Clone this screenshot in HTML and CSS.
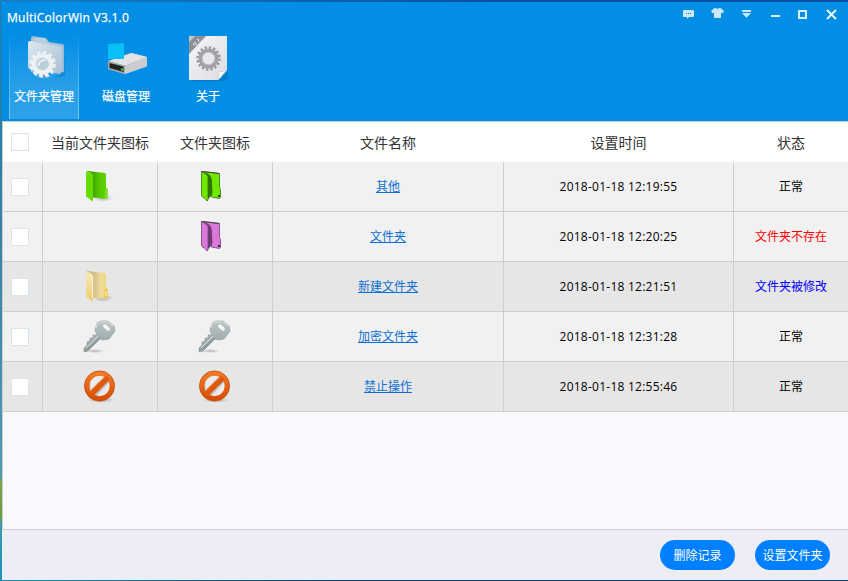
FILE: index.html
```html
<!DOCTYPE html>
<html lang="zh-CN">
<head>
<meta charset="utf-8">
<title>MultiColorWin V3.1.0</title>
<link rel="stylesheet" href="styles.css">
</head>
<body>
<svg class="defs" aria-hidden="true">
  <defs>
    <linearGradient id="folderGrad" x1="0" y1="0" x2="1" y2="1"><stop offset="0" stop-color="#dfe8f0"/><stop offset="1" stop-color="#a9c0d3"/></linearGradient>
    <linearGradient id="greenGrad" x1="0" x2="1"><stop offset=".2" stop-color="#3b9d00"/><stop offset=".6" stop-color="#55c600"/><stop offset="1" stop-color="#63d500"/></linearGradient>
    <linearGradient id="yellowGrad" x1="0" x2="1"><stop offset=".2" stop-color="#c9b684"/><stop offset=".7" stop-color="#efdd9c"/><stop offset="1" stop-color="#f0d46c"/></linearGradient>
    <linearGradient id="yellowFront" x1="0" y1="0" x2="0" y2="1"><stop offset="0" stop-color="#f6e9bb"/><stop offset="1" stop-color="#eecb68"/></linearGradient>
    <linearGradient id="keyGrad" x1="0" y1="0" x2="0" y2="1"><stop offset="0" stop-color="#bcc7c6"/><stop offset="1" stop-color="#8f9d9d"/></linearGradient>
    <linearGradient id="orangeGrad" x1="0" y1="0" x2="0" y2="1"><stop offset="0" stop-color="#f07c28"/><stop offset="1" stop-color="#d84e08"/></linearGradient>
    <linearGradient id="paperGrad" x1="0" y1="0" x2="1" y2="1"><stop offset="0" stop-color="#f6f6f8"/><stop offset="1" stop-color="#dcdde3"/></linearGradient>
    <radialGradient id="shadow"><stop offset="0" stop-color="#000" stop-opacity=".25"/><stop offset="1" stop-color="#000" stop-opacity="0"/></radialGradient>

    <symbol id="folder-green" viewBox="0 0 34 34">
      <ellipse cx="20" cy="28" rx="10" ry="4" fill="url(#shadow)"/>
      <path d="M4 1l18 2 1 1v14l1.500 1v8.500l-1.500 1.500-13-1.500z" fill="url(#greenGrad)"/>
      <path d="M22 20l2.500-1.500v9l-2 1.500-1-1z" fill="#72df18"/>
      <path d="M3 1.500q4 .5 6.500 3l.5 1v24.500l-1 1.500q-2-3-5.500-4.500L3 26z" fill="#68dd05"/>
      <path d="M3.500 2q4 .5 6 3" fill="none" stroke="#8aed38"/>
    </symbol>
    <symbol id="folder-yellow" viewBox="0 0 34 34">
      <ellipse cx="20" cy="28" rx="10" ry="4" fill="url(#shadow)"/>
      <path d="M4 1l18 2 1 1v14l1.500 1v8.500l-1.500 1.500-13-1.500z" fill="url(#yellowGrad)"/>
      <path d="M21.500 20l3-1.500v9l-2 1.500-1-1z" fill="#edc24a"/><path d="M23 21v5" stroke="#fff3c4"/>
      <path d="M3 1.500q4 .5 6.500 3l.5 1v24.500l-1 1.500q-2-3-5.500-4.500L3 26z" fill="url(#yellowFront)"/>
      <path d="M9.500 6v22" stroke="#fff5d2"/>
    </symbol>
    <symbol id="folder-lined" viewBox="0 0 34 34">
      <path d="M6 1.800l15.500 1.700v14l1 2v7.500l-1 1.500-8-1.500V12z" class="fill edge"/>
      <path d="M5 2q6 1 8 5 1.500 3 1 8l.5 7q-.5 4-4.500 7V6z" class="dark"/>
      <path d="M3.500 1.500q4 1.500 6.500 5v23.500l-1 1q-1.500-3-5-4.500l-.5-1z" class="fill edge"/>
      <path d="M3.500 1.500l4 .3 14 1.700" fill="none" stroke="#444"/>
      <path d="M20 26h2" stroke="#111" stroke-width="1.500"/>
    </symbol>
    <symbol id="key" viewBox="0 0 34 34">
      <ellipse cx="12" cy="31" rx="10" ry="2" fill="url(#shadow)"/>
      <path fill="url(#keyGrad)" fill-rule="evenodd" stroke="#8d9b9a" stroke-width=".6" d="M14 3l4-2h7l6 5 1 5-6 8-6 1-3-1L5 31l-4 1v-4l3-3v-3l3-1v-3h3v-3l4 0-2-5zM20 5l0 2 5 4 2-1-1-3-4-3z"/>
      <path d="M13 8l1-4 4-2h7l5 4M3 28L15 16" fill="none" stroke="#dce3e2"/>
      <path d="M20 5l0 2 5 4 2-1-1-3-4-3z" fill="#f6f6f6"/>
      <path d="M5 29L17 18" stroke="#7d8c8a"/>
    </symbol>
    <symbol id="ban" viewBox="0 0 34 34">
      <ellipse cx="18" cy="30" rx="14" ry="3" fill="url(#shadow)"/>
      <circle cx="16.500" cy="16" r="12" fill="#ececec"/>
      <path d="M6.500 22V10l6-5h11M12 26l14-15" fill="none" stroke="#aaa" stroke-width="2" opacity=".6"/>
      <circle cx="16.500" cy="16" r="12.700" fill="none" stroke="url(#orangeGrad)" stroke-width="5"/>
      <path d="M8 24.500L25 7.500" stroke="#dc5b10" stroke-width="5.500"/>
      <path d="M6.500 21.500L22 6.500" stroke="#f18b43" stroke-width="1"/>
      <circle cx="16.500" cy="16" r="15" fill="none" stroke="#c65213" stroke-width=".8"/>
    </symbol>
  </defs>
</svg>

<div class="window">
  <header class="top">
    <div class="titlebar">
      <h1 class="title">MultiColorWin V3.1.0</h1>
      <div class="controls">
        <svg viewBox="0 0 13 13"><path d="M2 2h9q1 0 1 1v5q0 1-1 1H7l-2 2V9H2q-1 0-1-1V3q0-1 1-1z" fill="#cbe8fb"/><path d="M4 5.500h1m1 0h1m1 0h1" stroke="#0478c6"/></svg>
        <svg viewBox="0 0 13 13"><path d="M3.500 0h1.500q1.500 2 3 0h1.500L13 3l-1.500 2.500-1.500-1V10H3V4.500l-1.500 1L0 3z" fill="#cbe8fb"/></svg>
        <svg viewBox="0 0 13 13"><path d="M2 2h9v2H2zM2 5h9L6.500 9.800z" fill="#cbe8fb"/></svg>
        <svg class="minimize" viewBox="0 0 13 13"><path d="M2 7h9v2H2z" fill="#d9effc"/></svg>
        <svg viewBox="0 0 13 13"><path d="M3 3h7v7H3z" fill="none" stroke="#d9effc" stroke-width="2"/></svg>
        <svg viewBox="0 0 13 13"><path d="M2 2l9 9M11 2l-9 9" stroke="#eef8ff" stroke-width="1.900"/></svg>
      </div>
    </div>
    <nav class="tools">
      <a class="tool active">
        <svg viewBox="0 0 46 48">
          <path d="M43 20v18l-12 5 13-2z" fill="#0873b8" opacity=".5"/>
          <path d="M10 3q0-2 2-2l13 2 3 4 13 2q2 0 2 2v26H10z" fill="#9dbdd6"/>
          <path d="M12 3h12l3 5 14 3v24H12z" fill="#b9cfe1"/>
          <path d="M7 8q0-2 2-2l29 6q2 0 2 2v24l-1 1L9 34q-2 0-2-2z" fill="url(#folderGrad)"/>
          <circle cx="22.500" cy="30" r="11.500" fill="none" stroke="#bccbd5" stroke-width="3.500" stroke-dasharray="3.500 2.521"/>
          <circle cx="21.500" cy="29" r="11.500" fill="none" stroke="#edf1f3" stroke-width="3.500" stroke-dasharray="3.500 2.521"/>
          <circle cx="21.500" cy="29" r="8.300" fill="none" stroke="#edf1f3" stroke-width="5"/>
          <circle cx="21.500" cy="29" r="6" fill="#b9ceda" stroke="#cad3da"/><path d="M17.500 31q0-6 7-6" fill="none" stroke="#e4edf3" stroke-width="2"/>
        </svg>
        <span>文件夹管理</span>
      </a>
      <a class="tool">
        <svg viewBox="0 0 46 48">
          <path d="M5 30L29 18l15 4v9L22 39 5 34z" fill="#b9bdc1"/>
          <path d="M5 26l23-8 16 4-22 8.500z" fill="#e2e3e5"/>
          <path d="M22 30.500L44 22v9.500L22 39z" fill="#c9cbce"/>
          <path d="M5 26l17 4.500V39L5 34z" fill="#a8a8a8"/>
          <path d="M6.500 28l14 3.500v5.500l-14-4z" fill="#222"/>
          <circle cx="19" cy="34.500" r="1.300" fill="#35c735"/>
          <path d="M5 9l16-1v16H5z" fill="#08bff7"/>
        </svg>
        <span>磁盘管理</span>
      </a>
      <a class="tool">
        <svg viewBox="0 0 46 48">
          <path d="M6 45h29l8-8v7l-8 2H6z" fill="#0872b7" opacity=".7"/>
          <path d="M4 1h38v34l-9 10H4z" fill="url(#paperGrad)"/>
          <path d="M33 45q1-5 0-8 4 0 9-2z" fill="#fafafa" stroke="#c4c5cb" stroke-width=".7"/>
          <path d="M4 1h17L4 19z" fill="#8d9197"/><path d="M4 7l6-6H4z" fill="#c8cbd0"/><path d="M8 9l2-2 2 2-2 1zm4-4l1-1 1 3" stroke="#dfe1e4" fill="none"/>
          <circle cx="23.500" cy="23.500" r="11" fill="none" stroke="#97999d" stroke-width="2.500" stroke-dasharray="2.400 1.919"/>
          <circle cx="23.500" cy="23.500" r="8.300" fill="none" stroke="#a0a2a6" stroke-width="3.600"/>
          <circle cx="23.500" cy="23.500" r="6.300" fill="#e8e8ec" stroke="#b9babf"/>
        </svg>
        <span>关于</span>
      </a>
    </nav>
  </header>

  <main class="list">
    <div class="row head">
      <div><i class="check"></i></div><div>当前文件夹图标</div><div>文件夹图标</div><div>文件名称</div><div>设置时间</div><div>状态</div>
    </div>
    <div class="row">
      <div><i class="check"></i></div>
      <div><svg class="ico"><use href="#folder-green"/></svg></div>
      <div><svg class="ico lined-green"><use href="#folder-lined"/></svg></div>
      <div><a class="link">其他</a></div><div class="time">2018-01-18 12:19:55</div><div>正常</div>
    </div>
    <div class="row">
      <div><i class="check"></i></div>
      <div></div>
      <div><svg class="ico lined-pink"><use href="#folder-lined"/></svg></div>
      <div><a class="link">文件夹</a></div><div class="time">2018-01-18 12:20:25</div><div class="missing">文件夹不存在</div>
    </div>
    <div class="row dark-row">
      <div><i class="check"></i></div>
      <div><svg class="ico"><use href="#folder-yellow"/></svg></div>
      <div></div>
      <div><a class="link">新建文件夹</a></div><div class="time">2018-01-18 12:21:51</div><div class="changed">文件夹被修改</div>
    </div>
    <div class="row">
      <div><i class="check"></i></div>
      <div><svg class="ico"><use href="#key"/></svg></div>
      <div><svg class="ico"><use href="#key"/></svg></div>
      <div><a class="link">加密文件夹</a></div><div class="time">2018-01-18 12:31:28</div><div>正常</div>
    </div>
    <div class="row dark-row">
      <div><i class="check"></i></div>
      <div><svg class="ico"><use href="#ban"/></svg></div>
      <div><svg class="ico"><use href="#ban"/></svg></div>
      <div><a class="link">禁止操作</a></div><div class="time">2018-01-18 12:55:46</div><div>正常</div>
    </div>
  </main>

  <footer class="actions">
    <button class="btn">删除记录</button>
    <button class="btn">设置文件夹</button>
  </footer>
</div>
</body>
</html>
```

FILE: styles.css
```css
* { box-sizing: border-box; }
body {
  margin: 0;
  width: 848px;
  height: 581px;
  padding: 2px 0 1px 2px;
  overflow: hidden;
  background:
    linear-gradient(90deg, #1581c2, #06509c 60%, #05509c) 0 0 / 100% 2px no-repeat,
    linear-gradient(90deg, #1690b8, #07437b 40%, #07437b) 0 100% / 100% 1px no-repeat,
    linear-gradient(#1581c2, #287fa5 25%, #4c9bb0 82%, #78a545 83%, #6c9e3c 89%, #3c9bae 90%, #1a93b8);
  font: 12px/16px "Open Sans", "Noto Sans CJK SC", sans-serif;
  color: #000;
}
.defs { position: absolute; width: 0; height: 0; }
.window {
  height: 578px;
  display: flex;
  flex-direction: column;
  background: #f7f9fd;
  border-top-left-radius: 3px;
  overflow: hidden;
}
.top { height: 119px; background: #028ee5; color: #fff; }
.titlebar { height: 33px; display: flex; justify-content: space-between; padding: 0 10px 0 5px; }
.title { margin: 8px 0 0; font-size: 12px; line-height: 16px; font-weight: 400; letter-spacing: .25px; -webkit-text-stroke: .25px #fff; }
.controls { display: flex; gap: 16px; padding-top: 6px; }
.controls svg { width: 13px; height: 13px; }
.controls .minimize { margin-right: -2px; }
.tools { display: flex; gap: 12px; padding-left: 7px; }
.tool {
  width: 70px;
  height: 84px;
  display: flex;
  flex-direction: column;
  align-items: center;
  border: solid transparent;
  border-width: 0 1px;
}
.tool svg { width: 46px; height: 48px; }
.tool span { margin-top: 5.5px; white-space: nowrap; -webkit-text-stroke: .2px #fff; }
.tool.active {
  background: linear-gradient(rgba(255, 255, 255, 0), rgba(255, 255, 255, .15) 60%, rgba(255, 255, 255, .17));
  border-image: linear-gradient(rgba(255, 255, 255, .03), rgba(255, 255, 255, .4)) 1;
}
.list {
  flex: 1;
  border: solid #cecece;
  border-width: 1px 0 1px 1px;
}
.row {
  display: grid;
  grid-template-columns: 40px 115px 115px 231px 230px 1fr;
  height: 50px;
  background: #f1f1f1;
  border-bottom: 1px solid #cecece;
}
.row > div {
  display: flex;
  align-items: center;
  justify-content: center;
  border-right: 1px solid #cecece;
  white-space: nowrap;
}
.row > div:first-child { justify-content: flex-start; padding-left: 8px; }
.row > div:last-child { border-right: 0; }
.row.dark-row { background: #e6e6e6; }
.row.head { height: 40px; background: #fff; border-bottom: 0; font-size: 14px; color: #333; }
.row.head > div { border-color: transparent; padding-top: 1px; }
.row.head > div:first-child { padding-top: 0; }
.check { width: 18px; height: 18px; background: #fff; border: 1px solid #d9e4ee; }
.ico { width: 34px; height: 34px; margin-top: 1px; }
.lined-green { fill: #70e800; color: #327505; }
.lined-pink { fill: #db78db; color: #713c76; }
.dark { fill: currentColor; }
.edge { stroke: currentColor; stroke-width: .8px; }
.link { color: #0d6fd1; text-decoration: underline; text-underline-offset: 1px; padding-top: 1px; }
.time { letter-spacing: .25px; }
.missing { color: #f00; }
.changed { color: #00f; }
.actions {
  height: 50px;
  display: flex;
  justify-content: flex-end;
  align-items: center;
  gap: 20px;
  padding-right: 18px;
  background: #ededf6;
}
.btn {
  width: 75px;
  height: 30px;
  padding: 2px 0 0;
  border: 0;
  border-radius: 15px;
  background: #007fff;
  color: #fff;
  font: inherit;
  white-space: nowrap;
}
```
